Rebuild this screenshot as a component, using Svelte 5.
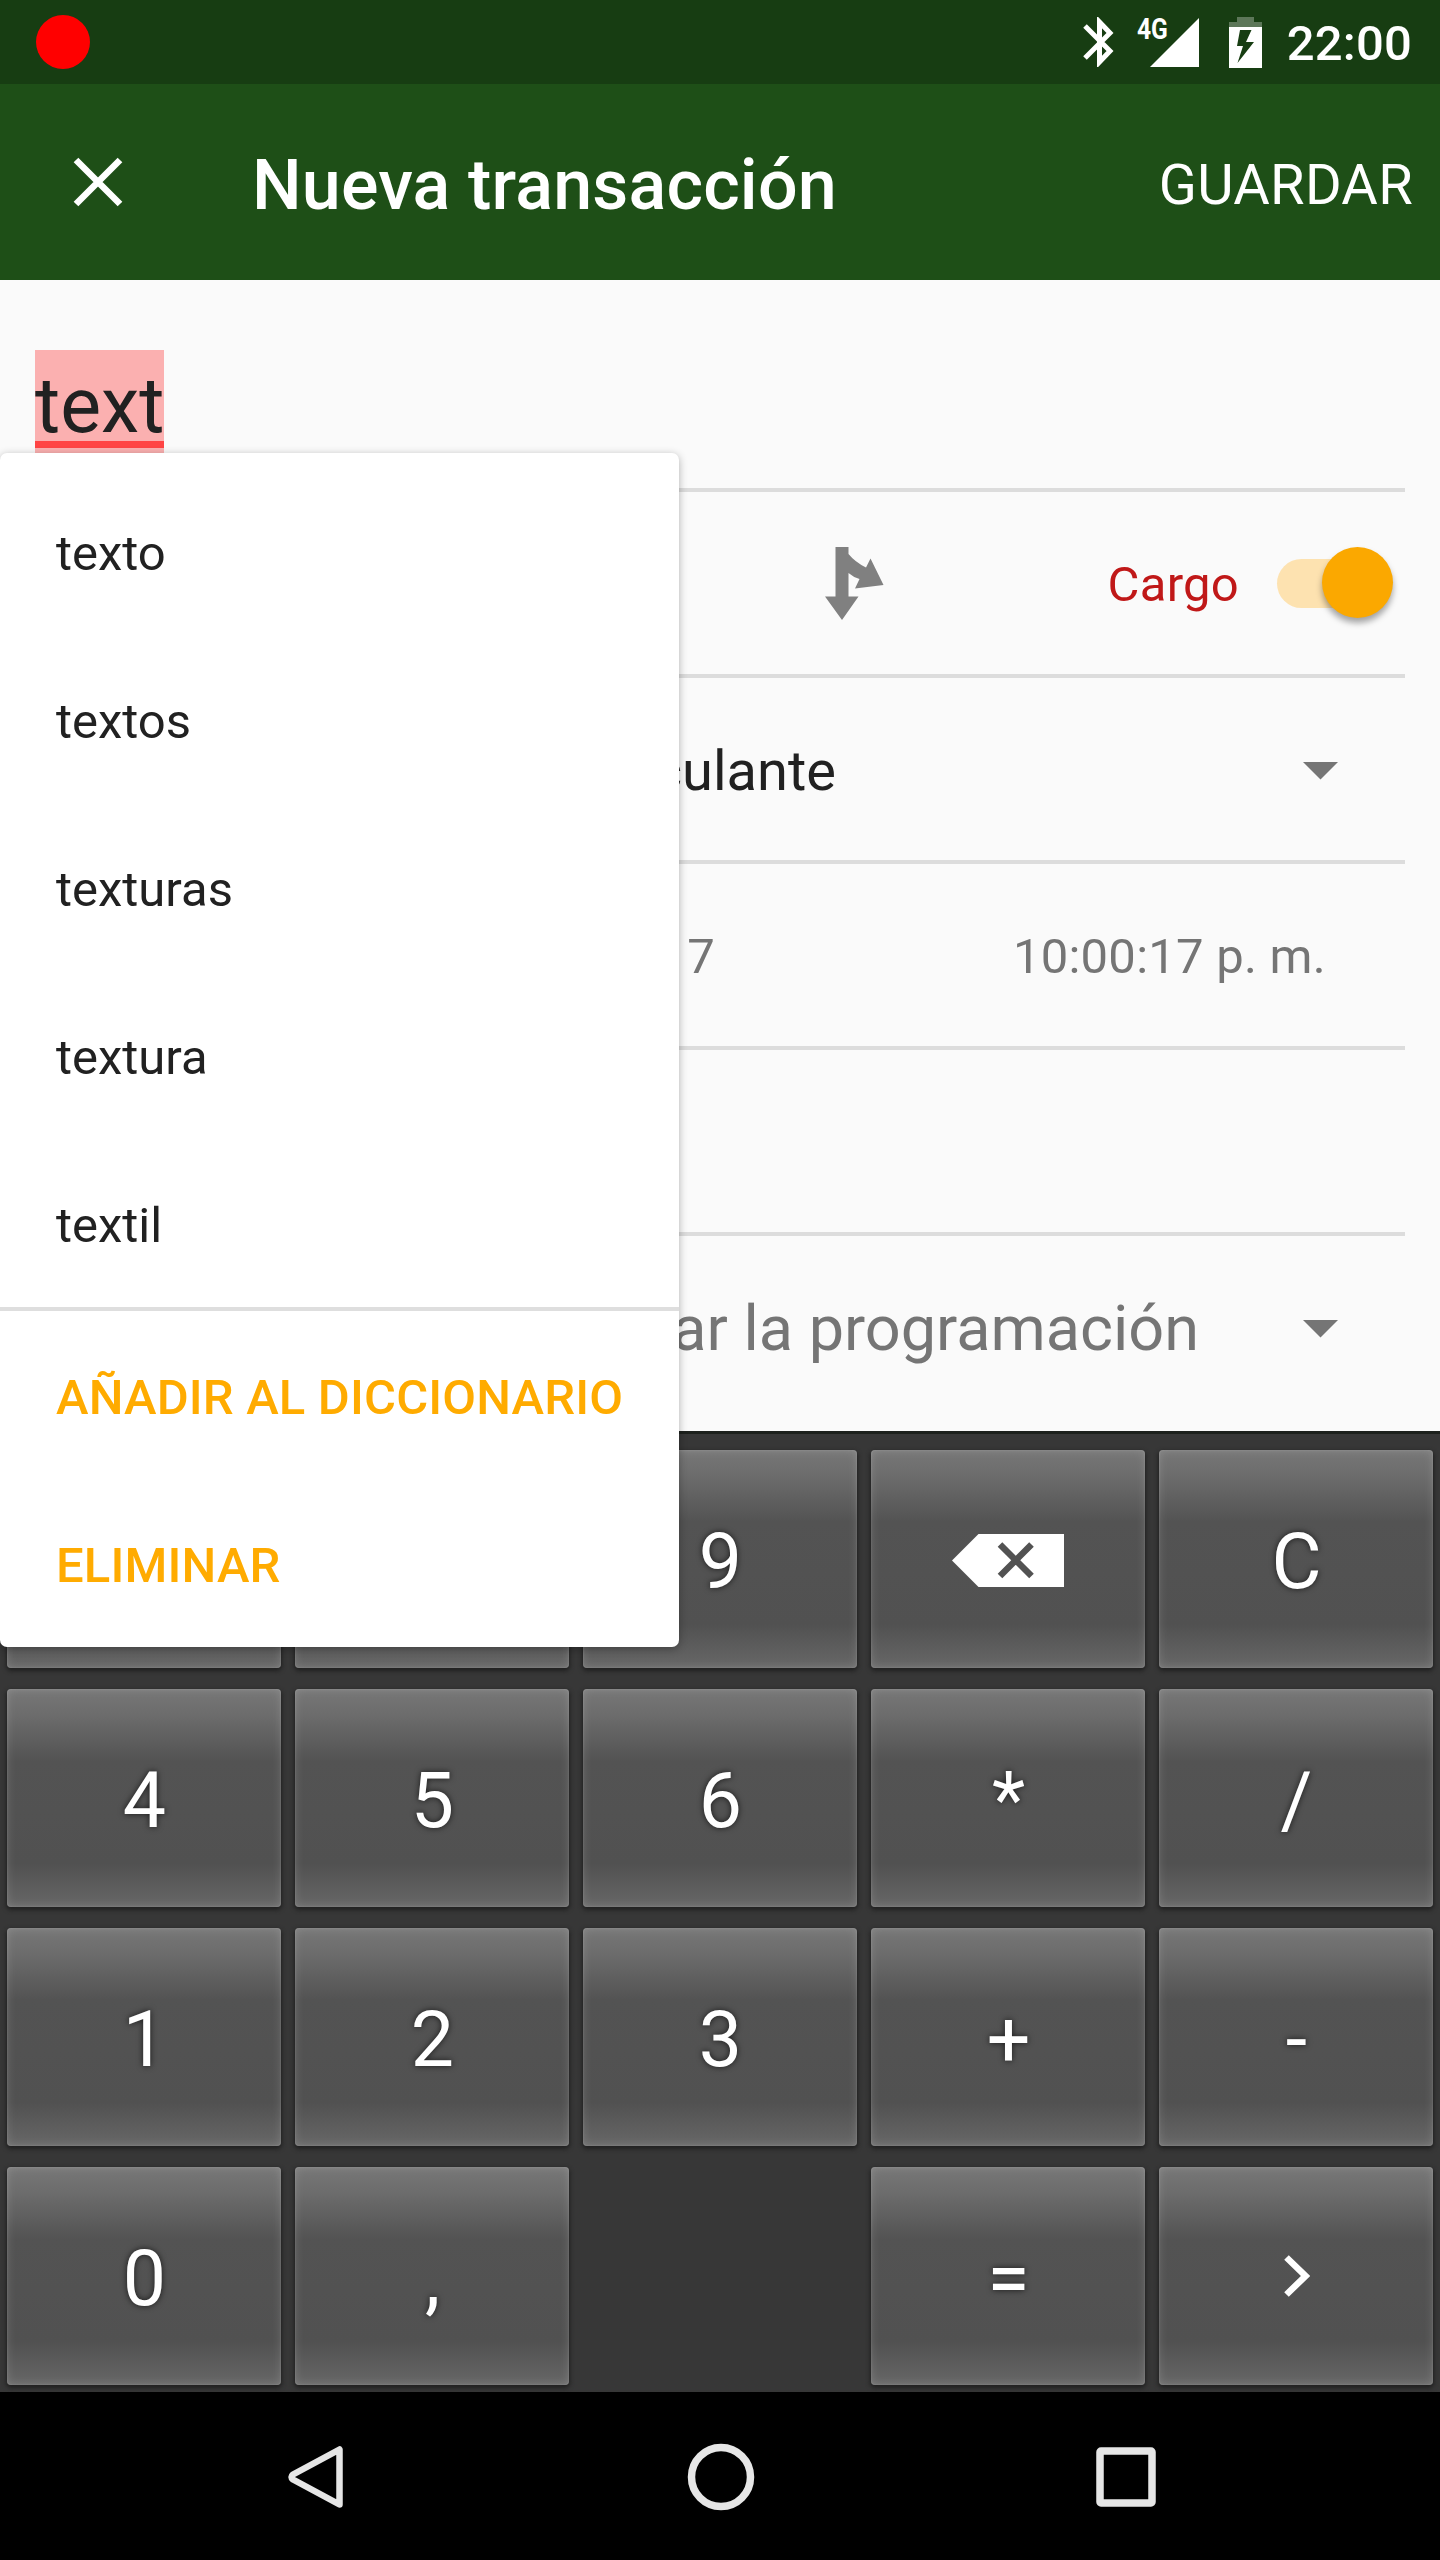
<script>
  const suggestions = ['texto', 'textos', 'texturas', 'textura', 'textil'];
  const actions = ['AÑADIR AL DICCIONARIO', 'ELIMINAR'];
  // The first two keys lie under the suggestion popup, so they carry no label.
  const keys = [
    'covered', 'covered', '9', 'backspace', 'C',
    '4', '5', '6', '*', '/',
    '1', '2', '3', '+', '-',
    '0', ',', '', '=', 'next'
  ];
</script>

<div class="screen">
  <div class="status">
    <span class="record"></span>
    <svg class="bt" width="32" height="50" viewBox="0 0 32 50">
      <path d="M2 9L27 34L16.500 45V5L27 16L2 41" fill="none" stroke="#fff" stroke-width="5" stroke-miterlimit="10" />
    </svg>
    <div class="signal">
      <span class="net">4G</span>
      <svg width="49" height="49" viewBox="0 0 49 49"><path d="M49 0V49H0Z" fill="#fff" /></svg>
    </div>
    <svg class="battery" width="33" height="51" viewBox="0 0 33 51">
      <path d="M8 0H25V5H33V10H0V5H8Z" fill="#fff" opacity=".3" />
      <path fill-rule="evenodd" d="M0 10H33V51H0ZM11 13L8 29H14L8.500 46L25 25H17L22.500 13Z" fill="#fff" />
    </svg>
    <span class="clock">22:00</span>
  </div>

  <header>
    <svg width="50" height="50" viewBox="0 0 50 50">
      <path d="M3 3L47 47M47 3L3 47" stroke="#fff" stroke-width="6.600" />
    </svg>
    <h1>Nueva transacción</h1>
    <span class="save">GUARDAR</span>
  </header>

  <main>
    <div class="row payee"><span class="word">text</span></div>
    <div class="row amount">
      <svg class="split" width="60" height="74" viewBox="0 0 60 74">
        <path d="M10.500 0H23.500V7Q30 15 41 20.500L45.500 11.500L58.500 38L30 41.500L34.500 32Q28 30 23.500 26V49.500H33.500L17 73L0 49.500H10.500Z" fill="#808080" />
      </svg>
      <span class="type">Cargo</span>
      <span class="switch"><span class="thumb"></span></span>
    </div>
    <div class="row account">
      <span class="name">Activo circulante</span>
      <svg class="caret" width="35" height="18" viewBox="0 0 35 18"><path d="M0 0H35L17.500 17.500Z" fill="#757575" /></svg>
    </div>
    <div class="row when"><span class="date">17</span><span class="time">10:00:17 p. m.</span></div>
    <div class="row"></div>
    <div class="row schedule">
      <span class="hint">Seleccionar la programación</span>
      <svg class="caret" width="35" height="18" viewBox="0 0 35 18"><path d="M0 0H35L17.500 17.500Z" fill="#757575" /></svg>
    </div>
  </main>

  <section class="keyboard">
    {#each keys as key}
      {#if key === ''}
        <span></span>
      {:else}
        <div class="key">
          {#if key === 'backspace'}
            <svg class="backspace" width="112" height="53" viewBox="0 0 112 53">
              <path d="M0 26.500L26.500 0H112V53H26.500Z" fill="#fff" />
              <path d="M48 10.500L79.500 42M79.500 10.500L48 42" stroke="#525252" stroke-width="6.500" />
            </svg>
          {:else if key === 'next'}
            <svg class="next" width="26" height="42" viewBox="0 0 26 42">
              <path d="M2.500 2.500L21.500 21L2.500 39.500" fill="none" stroke="#fff" stroke-width="6.500" />
            </svg>
          {:else if key !== 'covered'}
            <span>{key}</span>
          {/if}
        </div>
      {/if}
    {/each}
  </section>

  <nav>
    <svg width="58" height="68" viewBox="0 0 58 68">
      <path d="M52.500 6.500V61.500L6 36.500Q3 34 6 31.500Z" fill="none" stroke="#e6e6e6" stroke-width="6.500" stroke-linejoin="round" />
    </svg>
    <svg width="68" height="68" viewBox="0 0 68 68"><circle cx="34" cy="34" r="29.500" fill="none" stroke="#e6e6e6" stroke-width="7.500" /></svg>
    <svg width="60" height="60" viewBox="0 0 60 60"><rect x="4" y="4" width="52" height="52" rx="1" fill="none" stroke="#e6e6e6" stroke-width="7.500" stroke-linejoin="round" /></svg>
  </nav>

  <div class="popup">
    {#each suggestions as s}<div class="item">{s}</div>{/each}
    <div class="divider"></div>
    {#each actions as a}<div class="item action">{a}</div>{/each}
  </div>
</div>

<style>
  :global(body) { margin: 0; }
  .screen {
    position: relative;
    width: 1440px;
    height: 2560px;
    overflow: hidden;
    background: #fafafa;
    font-family: Roboto, sans-serif;
    color: #212121;
    display: flex;
    flex-direction: column;
  }
  svg { display: block; flex: none; }
  .screen > * { box-sizing: border-box; flex: none; }

  .status {
    height: 84px;
    background: #173d12;
    color: #fff;
    display: flex;
    align-items: center;
    padding: 0 28px 0 36px;
  }
  .record { width: 54px; height: 54px; border-radius: 50%; background: #f00; margin-right: auto; }
  .bt { margin-right: 23px; }
  .signal { width: 61px; height: 50px; display: flex; justify-content: flex-end; align-items: flex-end; position: relative; margin-right: 30px; }
  .net { position: absolute; left: -1px; top: 0; font: 700 30px/24px Roboto, sans-serif; transform: scaleX(.82); transform-origin: left; }
  .battery { margin-right: 25px; }
  .clock { font-size: 49px; font-weight: 500; line-height: 84px; padding-top: 4px; letter-spacing: .2px; }

  header {
    height: 196px;
    background: #1e4f17;
    color: #fff;
    display: flex;
    align-items: center;
    padding: 0 27px 0 73px;
  }
  h1 { margin: 6px auto 0 129px; font-size: 70px; font-weight: 500; letter-spacing: .18px; }
  .save { font-size: 56px; padding-top: 6px; letter-spacing: .3px; }

  main { height: 1151px; padding: 26px 35px 0; display: flex; flex-direction: column; }
  .row { box-sizing: border-box; height: 186px; flex: none; display: flex; align-items: center; border-bottom: 4px solid #dcdcdc; }
  .row:last-child { border-bottom-color: transparent; }
  .payee { padding-top: 16px; }
  .word {
    font-size: 77px;
    line-height: 90px;
    height: 110px;
    box-sizing: border-box;
    padding-top: 11px;
    background: linear-gradient(#f44, #f44) 0 91px / 100% 7px no-repeat #fbb0b0;
  }
  .split { margin: 2px 0 0 790px; }
  .amount { font-size: 49px; }
  .type { color: #c01818; margin-left: auto; padding-top: 2px; letter-spacing: .25px; }
  .switch { width: 112px; height: 49px; border-radius: 25px; background: #fde2b0; position: relative; margin: 0 16px 0 38px; }
  .thumb { position: absolute; left: 45px; top: -12px; width: 71px; height: 71px; border-radius: 50%; background: #fba800; box-shadow: 0 5px 6px rgba(0, 0, 0, .35); }
  .account { justify-content: flex-end; padding-top: 3px; }
  .name { font-size: 56px; margin-right: 467px; }
  .caret { margin: 0 67px 0 0; }
  .when { justify-content: flex-end; font-size: 49px; color: #757575; padding: 3px 79px 0 0; }
  .time { letter-spacing: .25px; }
  .date { margin-right: 298px; }
  .schedule { justify-content: flex-end; color: #757575; padding-top: 3px; }
  .hint { font-size: 63px; margin-right: 104px; }

  .keyboard {
    height: 961px;
    background: #373737;
    border-top: 3px solid #1d211d;
    display: grid;
    grid-template-columns: repeat(5, 274px);
    grid-auto-rows: 218px;
    gap: 21px 14px;
    padding: 16px 7px 0;
  }
  .key {
    border-radius: 4px;
    display: flex;
    align-items: center;
    justify-content: center;
    color: #fff;
    font-size: 77px;
    text-shadow: 0 0 6px rgba(0, 0, 0, .7);
    background: linear-gradient(#777, #6c6c6c 12%, #535353 33%, #515151 80%, #676767);
    box-shadow: 0 2px 4px 1px #202020, inset 0 0 10px rgba(255, 255, 255, .17), inset 0 0 2px rgba(255, 255, 255, .2);
  }
  .key span { padding: 5px 0 0 1px; }
  .backspace { margin-top: 3px; }
  .next { margin-left: 2px; }

  nav {
    height: 168px;
    background: #000;
    display: flex;
    align-items: center;
    justify-content: space-between;
    padding: 1px 284px 0 287px;
  }

  .popup {
    position: absolute;
    left: 0;
    top: 453px;
    width: 679px;
    height: 1194px;
    padding-top: 14px;
    border-radius: 7px;
    background: #fff;
    box-shadow: 0 2px 9px rgba(0, 0, 0, .3);
  }
  .item { box-sizing: border-box; height: 168px; padding: 5px 0 0 56px; line-height: 163px; font-size: 49px; }
  .divider { height: 4px; background: #dedede; }
  .action { color: #ffab00; font-weight: 500; letter-spacing: .16px; }
</style>
